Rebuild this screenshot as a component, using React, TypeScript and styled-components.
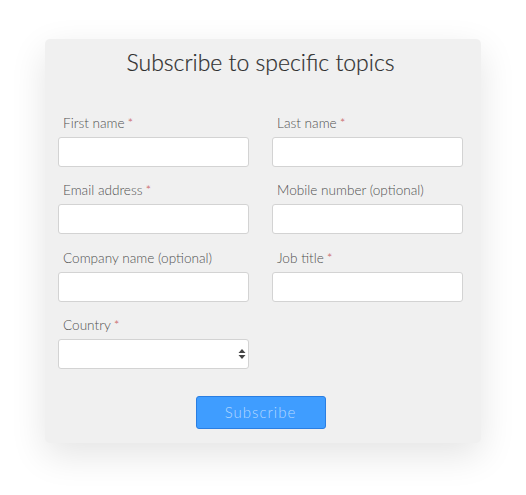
import React from "react";
import styled, { createGlobalStyle } from "styled-components";

const GlobalStyle = createGlobalStyle`
  html, body {
    margin: 0;
    padding: 0;
    background: #ffffff;
  }

  body {
    font-family: Lato, "Open Sans", sans-serif;
  }
`;

interface Field {
  label: string;
  required?: boolean;
  kind?: "text" | "select";
}

const fields: Field[] = [
  { label: "First name", required: true },
  { label: "Last name", required: true },
  { label: "Email address", required: true },
  { label: "Mobile number (optional)" },
  { label: "Company name (optional)" },
  { label: "Job title", required: true },
  { label: "Country", required: true, kind: "select" },
];

export default function App() {
  return (
    <>
      <GlobalStyle />
      <Page>
        <Card>
          <Title>Subscribe to specific topics</Title>

          <FormGrid>
            {fields.map((f) => (
              <FieldBox key={f.label}>
                <Label>
                  {f.label}
                  {f.required && <Required>*</Required>}
                </Label>
                {f.kind === "select" ? (
                  <SelectWrap>
                    <Select defaultValue="">
                      <option value="" />
                    </Select>
                    <SelectArrows />
                  </SelectWrap>
                ) : (
                  <Input type="text" />
                )}
              </FieldBox>
            ))}
          </FormGrid>

          <Actions>
            <SubmitButton type="button">Subscribe</SubmitButton>
          </Actions>
        </Card>
      </Page>
    </>
  );
}

function SelectArrows() {
  return (
    <ArrowIcon width="8" height="12" viewBox="0 0 8 12">
      <path d="M4 1 L7.5 5 L0.5 5 Z" fill="#444" />
      <path d="M4 11 L7.5 7 L0.5 7 Z" fill="#444" />
    </ArrowIcon>
  );
}

const Page = styled.div`
  padding: 39px 0 60px 45px;
`;

const Card = styled.div`
  width: 436px;
  box-sizing: border-box;
  padding: 10px 18px 14px 13px;

  background-color: #f0f0f0;
  border-radius: 5px;
  box-shadow: 0 12px 36px rgba(0, 0, 0, 0.11);
`;

const Title = styled.h2`
  margin: 0 0 40px 0;

  font-size: 23px;
  line-height: 26px;
  font-weight: 300;
  text-align: center;
  color: #2e2e2e;
  -webkit-text-stroke: 0.2px #2e2e2e;
`;

const FormGrid = styled.div`
  display: grid;
  grid-template-columns: 191px 191px;
  column-gap: 23px;
  row-gap: 15.34px;
`;

const FieldBox = styled.div`
  display: flex;
  flex-direction: column;
`;

const Label = styled.label`
  padding-left: 5px;
  margin-bottom: 6px;

  font-size: 13.6px;
  line-height: 16px;
  font-weight: 300;
  color: #505050;
`;

const Required = styled.span`
  margin-left: 3px;
  color: #c8595b;
`;

const Input = styled.input`
  box-sizing: border-box;
  width: 100%;
  height: 30px;
  margin: 0;

  background: #ffffff;
  border: 1px solid #d3d3d3;
  border-radius: 3px;
  outline: none;
`;

const SelectWrap = styled.div`
  position: relative;
`;

const Select = styled.select`
  box-sizing: border-box;
  display: block;
  width: 100%;
  height: 30px;
  margin: 0;

  appearance: none;
  background: #ffffff;
  border: 1px solid #d3d3d3;
  border-radius: 3px;
  outline: none;
`;

const ArrowIcon = styled.svg`
  position: absolute;
  right: 3px;
  top: 9px;
  pointer-events: none;
`;

const Actions = styled.div`
  display: flex;
  justify-content: center;
  margin-top: 27px;
`;

const SubmitButton = styled.button`
  width: 130px;
  height: 33px;

  font-family: Lato, "Open Sans", sans-serif;
  font-size: 15px;
  font-weight: 300;
  letter-spacing: 1px;
  color: #b4d8ff;

  background-color: #3f9dff;
  border: 1px solid #2a7ee2;
  border-radius: 3px;
  cursor: pointer;
`;
